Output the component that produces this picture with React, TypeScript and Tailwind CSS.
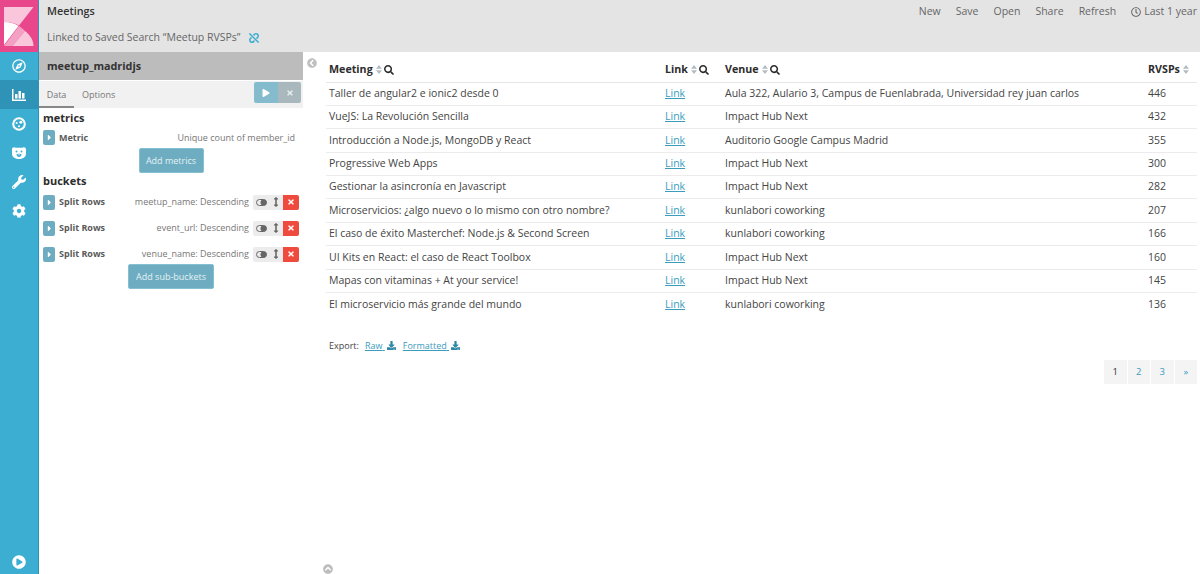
import React from "react";
import { FaRegCompass, FaWrench, FaCog, FaPlayCircle, FaChevronCircleLeft, FaChevronCircleUp, FaTimes, FaPlay, FaCaretRight, FaDownload, FaSearch, FaUnlink, FaRegClock, FaArrowsAltV } from "react-icons/fa";

const rows = [
  ["Taller de angular2 e ionic2 desde 0", "Aula 322, Aulario 3, Campus de Fuenlabrada, Universidad rey juan carlos", "446"],
  ["VueJS: La Revolución Sencilla", "Impact Hub Next", "432"],
  ["Introducción a Node.js, MongoDB y React", "Auditorio Google Campus Madrid", "355"],
  ["Progressive Web Apps", "Impact Hub Next", "300"],
  ["Gestionar la asincronía en Javascript", "Impact Hub Next", "282"],
  ["Microservicios: ¿algo nuevo o lo mismo con otro nombre?", "kunlabori coworking", "207"],
  ["El caso de éxito Masterchef: Node.js & Second Screen", "kunlabori coworking", "166"],
  ["UI Kits en React: el caso de React Toolbox", "Impact Hub Next", "160"],
  ["Mapas con vitaminas + At your service!", "Impact Hub Next", "145"],
  ["El microservicio más grande del mundo", "kunlabori coworking", "136"],
];

function Sort() {
  return (
    <svg width="6" height="9" viewBox="0 0 6 9" className="inline-block ml-[3px] fill-[#b4bcc2]">
      <path d="M3 0 6 3.700H0zM3 9 0 5.300h6z" />
    </svg>
  );
}

function Mag() {
  return <FaSearch size={10} className="inline-block ml-[2px] text-[#2d2d2d]" />;
}

function Expand() {
  return (
    <span className="w-[12px] h-[15px] rounded-[2px] bg-[#6eadc1] flex items-center justify-center shrink-0">
      <FaCaretRight size={9} className="text-white" />
    </span>
  );
}

function Bucket({ label }: { label: string }) {
  return (
    <div className="flex items-center h-[26px] pl-[4px] pr-[4px]">
      <Expand />
      <span className="ml-[4px] text-[9px] font-bold text-[#5a5a5a]">Split Rows</span>
      <span className="ml-auto text-[9px] text-[#777]">{label}</span>
      <div className="ml-[4px] flex items-center h-[15px] w-[46px] rounded-[2px] bg-[#ececec] overflow-hidden">
        <span className="flex-1 flex items-center justify-center">
          <svg width="11" height="7" viewBox="0 0 11 7">
            <rect x="0.5" y="0.5" width="10" height="6" rx="3" fill="none" stroke="#666" />
            <circle cx="7.5" cy="3.5" r="3" fill="#666" />
          </svg>
        </span>
        <span className="w-[14px] flex items-center justify-center">
          <FaArrowsAltV size={10} className="text-[#666]" />
        </span>
        <span className="w-[16px] h-full bg-[#ee4b3e] flex items-center justify-center">
          <FaTimes size={8} className="text-white" />
        </span>
      </div>
    </div>
  );
}

function Nav({ children, active, first }: { children: React.ReactNode; active?: boolean; first?: boolean }) {
  return (
    <div className={`${first ? "h-[28px]" : "h-[29px]"} flex items-center justify-center ${active ? "bg-[#2f93b7]" : ""}`}>{children}</div>
  );
}

export default function App() {
  return (
    <div className="flex h-[574px] w-[1200px] overflow-hidden bg-white text-[#3c3c3c] [font-family:'Open_Sans',sans-serif]">
      <aside className="w-[39px] shrink-0 flex flex-col bg-[#3caed2] border-r-[1px] border-[#2f93b7]">
        <div className="h-[52px] bg-[#e8488b] flex items-center justify-center">
          <svg width="30" height="39" viewBox="0 0 30 39">
            <path d="M0 0h29.500L15 18.500C10 15.500 5 15 0 15z" fill="#f9c6dc" />
            <path d="M0 15C5.500 15 10 16 14.500 19L0 38z" fill="#fff" />
            <path d="M15 19 0 39h8.500L21 24C19 22 17 20 15 19z" fill="#f3a0c4" />
            <path d="M21 24C26 28 29.500 33 29.500 39H8.500z" fill="#f9c6dc" />
          </svg>
        </div>
        <Nav first><FaRegCompass size={14} className="text-white" /></Nav>
        <Nav active>
          <svg width="14" height="12" viewBox="0 0 14 12" className="fill-white">
            <path d="M0 0h1.500v10.500H14V12H0zM3 5h2.500v4.500H3zM6.500 2H9v7.500H6.500zM10 4h2.500v5.500H10z" />
          </svg>
        </Nav>
        <Nav>
          <svg width="14" height="14" viewBox="0 0 15 15">
            <circle cx="7.5" cy="7.500" r="6.200" fill="none" stroke="#fff" strokeWidth="2.200" />
            <circle cx="5" cy="6.500" r="1.100" fill="#fff" />
            <circle cx="9.500" cy="5.500" r="1.600" fill="#fff" />
            <circle cx="7.500" cy="10" r="1.100" fill="#fff" />
          </svg>
        </Nav>
        <Nav>
          <svg width="14" height="12" viewBox="0 0 14 12">
            <path d="M0 2.500C0 1 1.500 0 3 .5 4 .8 5 .8 7 .8s3-.0 4-.3C12.500 0 14 1 14 2.500V7c0 3-3.500 5-7 5S0 10 0 7z" fill="#fff" />
            <circle cx="4.500" cy="4.500" r="1" fill="#3caed2" />
            <circle cx="9.500" cy="4.500" r="1" fill="#3caed2" />
            <path d="M4.500 7.500C4.500 6.500 9.500 6.500 9.500 7.500 9.500 9 8 10 7 10s-2.500-1-2.500-2.500z" fill="#3caed2" />
            <path d="M6 7.200h2L7 8.500z" fill="#fff" />
          </svg>
        </Nav>
        <Nav><FaWrench size={14} className="text-white" /></Nav>
        <Nav><FaCog size={14} className="text-white" /></Nav>
        <div className="mt-auto h-[24px] flex items-center justify-center">
          <FaPlayCircle size={14} className="text-white" />
        </div>
      </aside>

      <div className="flex-1 flex flex-col min-w-0">
        <header className="h-[52px] shrink-0 bg-[#e4e4e4]">
          <div className="h-[23px] flex items-center pl-[8px] pr-[3px]">
            <span className="text-[10.800px] font-semibold text-[#333]">Meetings</span>
            <nav className="ml-auto flex items-center gap-[15px] text-[10.500px] text-[#666]">
              <span>New</span>
              <span>Save</span>
              <span>Open</span>
              <span>Share</span>
              <span>Refresh</span>
              <span className="flex items-center gap-[3px]"><FaRegClock size={10} />Last 1 year</span>
            </nav>
          </div>
          <div className="h-[29px] flex items-center pl-[8px] text-[10.500px] text-[#666]">
            Linked to Saved Search “Meetup RVSPs”
            <FaUnlink size={10} className="ml-[8px] text-[#3caed2]" />
          </div>
        </header>

        <div className="flex-1 flex min-h-0">
          <section className="w-[264px] shrink-0 flex flex-col">
            <div className="h-[28px] bg-[#bcbcbc] flex items-center pl-[8px] text-[10.800px] font-bold text-[#333]">meetup_madridjs</div>
            <div className="h-[27px] mt-px bg-[#f1f1f1] flex items-stretch pr-[2px] text-[9px] text-[#777]">
              <span className="w-[35px] pt-[2px] flex items-center justify-center border-b-[2px] border-[#888]">Data</span>
              <span className="ml-[8px] pt-[2px] flex items-center border-b-[2px] border-transparent">Options</span>
              <div className="ml-auto mt-[1px] h-[21px] w-[47px] flex rounded-[2px] overflow-hidden">
                <span className="w-[24px] bg-[#85bccd] flex items-center justify-center">
                  <FaPlay size={8} className="text-white" />
                </span>
                <span className="flex-1 bg-[#a8b8bd] flex items-center justify-center">
                  <FaTimes size={8} className="text-[#e8eef0]" />
                </span>
              </div>
            </div>
            <h3 className="mt-px pl-[4px] h-[18px] leading-[18px] text-[11px] font-bold text-[#2d2d2d]">metrics</h3>
            <div className="flex items-center h-[21px] pl-[4px] pr-[8px]">
              <Expand />
              <span className="ml-[4px] text-[9px] font-bold text-[#5a5a5a]">Metric</span>
              <span className="ml-auto text-[9px] text-[#777]">Unique count of member_id</span>
            </div>
            <div className="flex justify-center">
              <button className="h-[25px] w-[65px] rounded-[2px] bg-[#6eadc1] border border-[#85c0d2] text-[9px] text-[#e4f1f5]">Add metrics</button>
            </div>
            <h3 className="pl-[4px] h-[16px] leading-[15px] text-[11px] font-bold text-[#2d2d2d]">buckets</h3>
            <Bucket label="meetup_name: Descending" />
            <Bucket label="event_url: Descending" />
            <Bucket label="venue_name: Descending" />
            <div className="flex justify-center -mt-[3px]">
              <button className="h-[25px] w-[86px] rounded-[2px] bg-[#6eadc1] border border-[#85c0d2] text-[9px] text-[#e4f1f5]">Add sub-buckets</button>
            </div>
          </section>

          <main className="relative flex-1 min-w-0 pl-[23px] pr-[3px]">
            <FaChevronCircleLeft size={10} className="absolute left-[4px] top-[6px] text-[#c0c0c0]" />
            <table className="w-full table-fixed border-collapse text-[10.500px] text-[#444] mt-[6px]">
              <colgroup>
                <col className="w-[336px]" />
                <col className="w-[60px]" />
                <col className="w-[423px]" />
                <col />
              </colgroup>
              <thead>
                <tr className="h-[24px] border-b-[1px] border-[#e6e6e6] text-left text-[10.700px] text-[#2d2d2d]">
                  <th className="pl-[3px] pb-[2px] font-bold">Meeting<Sort /><Mag /></th>
                  <th className="pl-[3px] pb-[2px] font-bold">Link<Sort /><Mag /></th>
                  <th className="pl-[3px] pb-[2px] font-bold">Venue<Sort /><Mag /></th>
                  <th className="pl-[3px] pb-[2px] font-bold">RVSPs<Sort /></th>
                </tr>
              </thead>
              <tbody>
                {rows.map((r) => (
                  <tr key={r[0]} className="h-[23.400px] border-b-[1px] border-[#ececec] last:border-b-0">
                    <td className="pl-[3px] whitespace-nowrap">{r[0]}</td>
                    <td className="pl-[3px]"><span className="underline text-[#3b9cbd]">Link</span></td>
                    <td className="pl-[3px] whitespace-nowrap">{r[1]}</td>
                    <td className="pl-[3px]">{r[2]}</td>
                  </tr>
                ))}
              </tbody>
            </table>
            <div className="mt-[23px] pl-[3px] flex items-center text-[9px] text-[#444]">
              Export:
              <span className="ml-[6px] underline text-[#3b9cbd]">Raw{"\u00a0"}</span>
              <FaDownload size={9} className="ml-[2px] text-[#2f86a6]" />
              <span className="ml-[7px] underline text-[#3b9cbd]">Formatted{"\u00a0"}</span>
              <FaDownload size={9} className="ml-[2px] text-[#2f86a6]" />
            </div>
            <div className="mt-[8px] flex justify-end gap-px text-[9.500px]">
              <span className="w-[22.500px] h-[24px] bg-[#f4f4f4] flex items-center justify-center text-[#333]">1</span>
              <span className="w-[22.500px] h-[24px] bg-[#f4f4f4] flex items-center justify-center text-[#3b9cbd]">2</span>
              <span className="w-[22.500px] h-[24px] bg-[#f4f4f4] flex items-center justify-center text-[#3b9cbd]">3</span>
              <span className="w-[22.500px] h-[24px] bg-[#f4f4f4] flex items-center justify-center text-[#3b9cbd]">»</span>
            </div>
            <FaChevronCircleUp size={10} className="absolute left-[20px] bottom-[0px] text-[#bdbdbd]" />
          </main>
        </div>
      </div>
    </div>
  );
}
